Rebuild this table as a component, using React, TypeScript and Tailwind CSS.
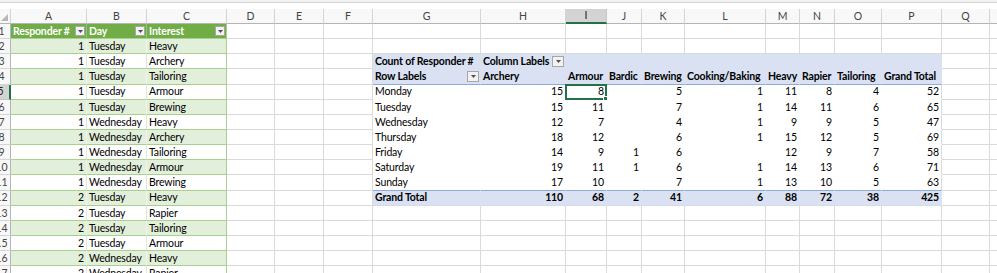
import type { ReactNode } from 'react';

type Col = { k: string; w: string };

const cols: Col[] = [
  { k: 'A', w: 'w-[76px]' },
  { k: 'B', w: 'w-[60px]' },
  { k: 'C', w: 'w-[80px]' },
  { k: 'D', w: 'w-[48px]' },
  { k: 'E', w: 'w-[49px]' },
  { k: 'F', w: 'w-[49px]' },
  { k: 'G', w: 'w-[108px]' },
  { k: 'H', w: 'w-[85px]' },
  { k: 'I', w: 'w-[41px]' },
  { k: 'J', w: 'w-[35px]' },
  { k: 'K', w: 'w-[43px]' },
  { k: 'L', w: 'w-[81px]' },
  { k: 'M', w: 'w-[34px]' },
  { k: 'N', w: 'w-[35px]' },
  { k: 'O', w: 'w-[47px]' },
  { k: 'P', w: 'w-[60px]' },
  { k: 'Q', w: 'w-[48px]' },
  { k: 'R', w: 'w-[60px]' },
];

const tableRows: string[][] = [
  ['1', 'Tuesday', 'Heavy'],
  ['1', 'Tuesday', 'Archery'],
  ['1', 'Tuesday', 'Tailoring'],
  ['1', 'Tuesday', 'Armour'],
  ['1', 'Tuesday', 'Brewing'],
  ['1', 'Wednesday', 'Heavy'],
  ['1', 'Wednesday', 'Archery'],
  ['1', 'Wednesday', 'Tailoring'],
  ['1', 'Wednesday', 'Armour'],
  ['1', 'Wednesday', 'Brewing'],
  ['2', 'Tuesday', 'Heavy'],
  ['2', 'Tuesday', 'Rapier'],
  ['2', 'Tuesday', 'Tailoring'],
  ['2', 'Tuesday', 'Armour'],
  ['2', 'Wednesday', 'Heavy'],
  ['2', 'Wednesday', 'Rapier'],
];

const pivotHeads = ['Archery', 'Armour', 'Bardic', 'Brewing', 'Cooking/Baking', 'Heavy', 'Rapier', 'Tailoring', 'Grand Total'];

const pivotRows: [string, string[]][] = [
  ['Monday', ['15', '8', '', '5', '1', '11', '8', '4', '52']],
  ['Tuesday', ['15', '11', '', '7', '1', '14', '11', '6', '65']],
  ['Wednesday', ['12', '7', '', '4', '1', '9', '9', '5', '47']],
  ['Thursday', ['18', '12', '', '6', '1', '15', '12', '5', '69']],
  ['Friday', ['14', '9', '1', '6', '', '12', '9', '7', '58']],
  ['Saturday', ['19', '11', '1', '6', '1', '14', '13', '6', '71']],
  ['Sunday', ['17', '10', '', '7', '1', '13', '10', '5', '63']],
];
const grandTotal = ['110', '68', '2', '41', '6', '88', '72', '38', '425'];

const ROWS = 17;

function Drop({ size }: { size: string }) {
  return (
    <span className={`ml-auto -mr-[1px] flex shrink-0 items-center justify-center border border-[#a6a6a6] bg-[#f2f2f2] ${size}`}>
      <svg width="5" height="3" viewBox="0 0 5 3">
        <path d="M0 0h5L2.5 3z" fill="#505050" />
      </svg>
    </span>
  );
}

function cellFor(r: number, ci: number): { cls: string; content: ReactNode; selected?: boolean } {
  // source table A:C
  if (ci <= 2) {
    if (r === 1) {
      const heads = ['Responder #', 'Day', 'Interest'];
      return {
        cls: `bg-[#70ad47] text-white font-bold border-b-[#a9d08e] ${ci === 2 ? 'border-r-[#a9d08e]' : 'border-r-[#93c574]'}`,
        content: (
          <>
            <span>{heads[ci]}</span>
            <Drop size="w-[10px] h-[10px]" />
          </>
        ),
      };
    }
    const row = tableRows[r - 2];
    const banded = r % 2 === 0;
    const side = ci === 2 ? 'border-r-[#a9d08e]' : banded ? 'border-r-[#eef5ea]' : 'border-r-[#dde8d6]';
    return {
      cls: `${banded ? 'bg-[#e2efda]' : 'bg-white'} border-b-[#a9d08e] ${side} ${ci === 0 ? 'justify-end' : ''}`,
      content: row ? row[ci] : null,
    };
  }

  // pivot G3:P12
  if (ci >= 6 && ci <= 15 && r >= 3 && r <= 12) {
    const k = ci - 7;
    if (r === 3) {
      let content: ReactNode = null;
      if (ci === 6) content = 'Count of Responder #';
      if (ci === 7)
        content = (
          <>
            <span>Column Labels</span>
            <Drop size="w-[12px] h-[11px]" />
          </>
        );
      return { cls: 'bg-[#d9e1f2] border-[#d9e1f2] font-bold', content };
    }
    if (r === 4) {
      const content: ReactNode =
        ci === 6 ? (
          <>
            <span>Row Labels</span>
            <Drop size="w-[12px] h-[11px]" />
          </>
        ) : (
          pivotHeads[k]
        );
      return { cls: 'bg-[#d9e1f2] border-r-[#d9e1f2] border-b-[#8ea9db] font-bold', content };
    }
    if (r === 12) {
      return {
        cls: `bg-[#d9e1f2] border-r-[#d9e1f2] border-b-[#d3dbe9] font-bold ${ci > 6 ? 'justify-end' : ''}`,
        content: ci === 6 ? 'Grand Total' : grandTotal[k],
      };
    }
    const [day, vals] = pivotRows[r - 5];
    return {
      cls: `bg-white ${ci === 15 ? 'border-r-[#dadada]' : 'border-r-white'} ${r === 11 ? 'border-b-[#8ea9db]' : 'border-b-white'} ${ci > 6 ? 'justify-end' : ''}`,
      content: ci === 6 ? day : vals[k],
      selected: r === 5 && ci === 8,
    };
  }

  return { cls: 'bg-white border-[#dadada]', content: null };
}

function Cell({ r, ci }: { r: number; ci: number }) {
  const { cls, content, selected } = cellFor(r, ci);
  return (
    <div className={`relative flex h-full shrink-0 items-center overflow-visible whitespace-nowrap border-r border-b px-[2px] ${cols[ci].w} ${cls}`}>
      {content}
      {selected && (
        <div className="absolute -left-[1px] -top-[1px] -right-[1px] -bottom-[1px] border-2 border-[#217346]">
          <div className="absolute -bottom-[3px] -right-[3px] h-[5px] w-[5px] border border-white bg-[#217346]" />
        </div>
      )}
    </div>
  );
}

export default function App() {
  return (
    <div className="h-[273px] w-[997px] overflow-hidden bg-white font-['Lato',sans-serif] text-[10.5px] leading-none tracking-[-0.15px] text-black">
      <div className="h-[3px] border-b border-[#d4d4d4] bg-[#f1f1f1]" />
      <div className="h-[6px] bg-white" />

      {/* column letters */}
      <div className="flex h-[15px] tracking-normal">
        <div className="flex w-[11px] shrink-0 items-end justify-end border-r border-b border-r-[#d5d5d5] border-b-[#b5b5b5] bg-[#f8f8f8] pb-[2px] pr-[2px]">
          <svg width="7" height="7" viewBox="0 0 7 7">
            <path d="M7 0v7H0z" fill="#b7b7b7" />
          </svg>
        </div>
        {cols.map((c) => (
          <div
            key={c.k}
            className={`flex shrink-0 items-center justify-center border-r ${c.w} ${
              c.k === 'I'
                ? 'border-b-2 border-r-[#c6c6c6] border-b-[#217346] bg-[#d3d3d3] text-[#262626]'
                : 'border-b border-r-[#d5d5d5] border-b-[#b5b5b5] bg-[#f8f8f8] text-[#444]'
            }`}
          >
            {c.k}
          </div>
        ))}
      </div>

      {Array.from({ length: ROWS }, (_, i) => i + 1).map((r) => (
        <div key={r} className="flex h-[15.15px]">
          <div
            className={`flex w-[11px] shrink-0 items-center justify-end overflow-hidden border-b tracking-normal ${
              r === 5
                ? 'border-r-2 border-r-[#217346] border-b-[#c6c6c6] bg-[#d3d3d3] text-[#262626]'
                : 'border-r border-r-[#b5b5b5] border-b-[#d5d5d5] bg-[#f8f8f8] text-[#444]'
            }`}
          >
            <span className="w-[17px] shrink-0 text-center">{r}</span>
          </div>
          {cols.map((c, ci) => (
            <Cell key={c.k} r={r} ci={ci} />
          ))}
        </div>
      ))}
    </div>
  );
}
